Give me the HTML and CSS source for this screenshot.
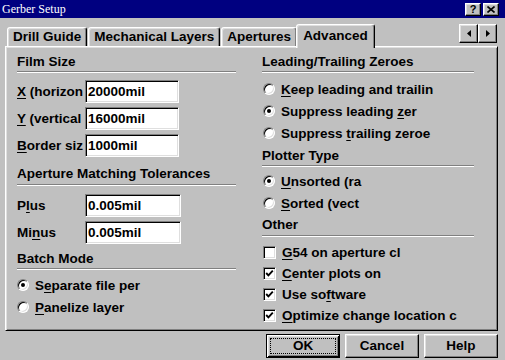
FILE: index.html
```html
<!DOCTYPE html>
<html lang="en">
<head>
  <meta charset="UTF-8" />
  <title>Gerber Setup</title>
  <link rel="stylesheet" href="styles.css">
</head>
<body>

  <div class="dialog">
    <div class="titlebar">
      <span class="title">Gerber Setup</span>
      <div class="caption-btns">
        <span class="cbtn">?</span>
        <span class="cbtn">
          <svg width="8" height="7" viewBox="0 0 8 7"><path d="M0.5 0.5 L7.5 6.5 M7.5 0.5 L0.5 6.5" stroke="#000" stroke-width="1.6" fill="none"/></svg>
        </span>
      </div>
    </div>

    <div class="tabrow">
      <div class="tabs">
        <div class="tab">Drill Guide</div>
        <div class="tab">Mechanical Layers</div>
        <div class="tab">Apertures</div>
        <div class="tab active">Advanced</div>
      </div>
      <div class="scroller">
        <span class="sbtn"><svg width="4" height="7" viewBox="0 0 4 7"><polygon points="4,0 0,3.5 4,7" fill="#000"/></svg></span>
        <span class="sbtn"><svg width="4" height="7" viewBox="0 0 4 7"><polygon points="0,0 4,3.5 0,7" fill="#000"/></svg></span>
      </div>
    </div>

    <div class="panel">
      <div class="col left">
        <div class="group">
          <div class="heading">Film Size</div>
          <div class="sep"></div>
          <div class="fields">
            <div class="field"><span class="label"><u>X</u> (horizon</span><input class="box" value="20000mil" readonly></div>
            <div class="field"><span class="label"><u>Y</u> (vertical</span><input class="box" value="16000mil" readonly></div>
            <div class="field"><span class="label"><u>B</u>order siz</span><input class="box" value="1000mil" readonly></div>
          </div>
        </div>

        <div class="group g-tol">
          <div class="heading">Aperture Matching Tolerances</div>
          <div class="sep loose"></div>
          <div class="fields f-tol">
            <div class="field"><span class="label">P<u>l</u>us</span><input class="box wide" value="0.005mil" readonly></div>
            <div class="field"><span class="label">Mi<u>n</u>us</span><input class="box wide" value="0.005mil" readonly></div>
          </div>
        </div>

        <div class="group g-batch">
          <div class="heading">Batch Mode</div>
          <div class="sep"></div>
          <div class="opts o-batch">
            <div class="opt"><span class="radio on"></span><span>S<u>e</u>parate file per</span></div>
            <div class="opt"><span class="radio"></span><span><u>P</u>anelize layer</span></div>
          </div>
        </div>
      </div>

      <div class="col right">
        <div class="group">
          <div class="heading">Leading/Trailing Zeroes</div>
          <div class="sep"></div>
          <div class="opts">
            <div class="opt"><span class="radio"></span><span><u>K</u>eep leading and trailin</span></div>
            <div class="opt"><span class="radio on"></span><span>Suppress leading <u>z</u>er</span></div>
            <div class="opt"><span class="radio"></span><span>Suppress <u>t</u>railing zeroe</span></div>
          </div>
        </div>

        <div class="group g-plot">
          <div class="heading">Plotter Type</div>
          <div class="sep"></div>
          <div class="opts tight">
            <div class="opt"><span class="radio on"></span><span><u>U</u>nsorted (ra</span></div>
            <div class="opt"><span class="radio"></span><span><u>S</u>orted (vect</span></div>
          </div>
        </div>

        <div class="group g-other">
          <div class="heading">Other</div>
          <div class="sep loose"></div>
          <div class="opts checks">
            <div class="opt"><span class="check"></span><span><u>G</u>54 on aperture cl</span></div>
            <div class="opt"><span class="check on"><svg width="9" height="9" viewBox="0 0 9 9"><path d="M1.2 4 L3.4 6.3 L7.8 1.6" stroke="#000" stroke-width="1.9" fill="none"/></svg></span><span><u>C</u>enter plots on</span></div>
            <div class="opt"><span class="check on"><svg width="9" height="9" viewBox="0 0 9 9"><path d="M1.2 4 L3.4 6.3 L7.8 1.6" stroke="#000" stroke-width="1.9" fill="none"/></svg></span><span>Use so<u>f</u>tware</span></div>
            <div class="opt"><span class="check on"><svg width="9" height="9" viewBox="0 0 9 9"><path d="M1.2 4 L3.4 6.3 L7.8 1.6" stroke="#000" stroke-width="1.9" fill="none"/></svg></span><span><u>O</u>ptimize change location c</span></div>
          </div>
        </div>
      </div>
    </div>

    <div class="buttons">
      <div class="btn default"><span class="focus">OK</span></div>
      <div class="btn">Cancel</div>
      <div class="btn">Help</div>
    </div>
  </div>

</body>
</html>
```

FILE: styles.css
```css
* {
  margin: 0;
  padding: 0;
  box-sizing: border-box;
}

html, body {
  width: 505px;
  height: 360px;
  overflow: hidden;
  background: #c0c0c0;
  font-family: "Liberation Sans", Arial, sans-serif;
  font-size: 13.5px;
  font-weight: bold;
  color: #000;
}

u {
  text-decoration-thickness: 1px;
  text-underline-offset: 2px;
}

.dialog {
  display: flex;
  flex-direction: column;
  height: 360px;
}

/* title bar */
.titlebar {
  height: 18px;
  background: #000080;
  display: flex;
  align-items: center;
  justify-content: space-between;
  padding: 0 6px 0 2px;
}

.title {
  font-family: "Liberation Serif", serif;
  font-weight: normal;
  font-size: 12px;
  line-height: 18px;
  color: #fff;
}

.caption-btns {
  display: flex;
  gap: 2px;
}

.cbtn,
.sbtn,
.btn {
  background: #c0c0c0;
  border: 1px solid;
  border-color: #fff #000 #000 #fff;
  box-shadow: inset -1px -1px #808080, inset 1px 1px #dfdfdf;
  display: flex;
  align-items: center;
  justify-content: center;
}

.cbtn {
  width: 16px;
  height: 13px;
  font-size: 11px;
  line-height: 1;
}

/* tabs */
.tabrow {
  height: 22px;
  margin-top: 6px;
  padding: 0 8px 0 7px;
  display: flex;
  align-items: flex-end;
  justify-content: space-between;
}

.tabs {
  height: 100%;
  display: flex;
  align-items: flex-end;
  gap: 1px;
}

.tab {
  height: 19px;
  padding: 0 5px;
  line-height: 17px;
  white-space: nowrap;
  background: #c0c0c0;
  border: 1px solid;
  border-bottom: none;
  border-color: #fff #000 transparent #fff;
  border-radius: 3px 3px 0 0;
  box-shadow: inset -1px 0 #808080, inset 1px 1px #dfdfdf;
}

.tab.active {
  height: 24px;
  margin: 0 -2px -2px;
  padding: 2px 6px 0;
  position: relative;
  z-index: 1;
}

.scroller {
  align-self: flex-start;
  display: flex;
}

.sbtn {
  width: 19px;
  height: 19px;
}

/* panel */
.panel {
  height: 285px;
  margin: 0 7px 0 5px;
  padding: 7px 0 0 11px;
  border: 1px solid;
  border-color: #fff #000 #000 #fff;
  box-shadow: inset 1px 1px #dfdfdf, inset -1px -1px #808080;
  display: flex;
  gap: 26px;
}

.col {
  display: flex;
  flex-direction: column;
}

.col.left { width: 219px; }
.col.right { width: 212px; }

.heading {
  height: 16px;
  line-height: 16px;
  white-space: nowrap;
}

.sep {
  margin-top: 1px;
  border-top: 1px solid #808080;
  border-bottom: 1px solid #fff;
}

.sep.loose { margin-top: 2px; }

.g-tol { margin-top: 9px; }
.g-batch { margin-top: 7px; }
.g-plot { margin-top: 4px; }
.g-other { margin-top: 3px; }

/* text fields */
.fields {
  margin-top: 7px;
  display: flex;
  flex-direction: column;
  gap: 4px;
}

.fields.f-tol { margin-top: 8px; }

.field {
  height: 23px;
  display: flex;
  align-items: center;
}

.label {
  width: 68px;
  flex: none;
  white-space: nowrap;
}

.box {
  width: 94px;
  height: 23px;
  padding: 0 0 0 2px;
  font: inherit;
  color: #000;
  background: #fff;
  outline: none;
  border: 1px solid;
  border-color: #808080 #fff #fff #808080;
  box-shadow: inset 1px 1px #000, inset -1px -1px #dfdfdf;
}

.box.wide { width: 96px; }

/* radio and check options */
.opts {
  margin-top: 5px;
  display: flex;
  flex-direction: column;
}

.opts.tight { margin-top: 3px; }
.o-batch { margin-top: 4px; }

.opt {
  height: 22px;
  display: flex;
  align-items: center;
  gap: 6px;
  white-space: nowrap;
}

.checks .opt { height: 21px; }

.right .opt { padding-left: 1px; }

.radio {
  flex: none;
  width: 12px;
  height: 12px;
  border-radius: 50%;
  background: #fff;
  border: 1px solid;
  border-color: #808080 #fff #fff #808080;
  box-shadow: inset 1px 1px #000, inset -1px -1px #dfdfdf;
  display: flex;
  align-items: center;
  justify-content: center;
}

.radio.on::after {
  content: "";
  width: 4px;
  height: 4px;
  border-radius: 50%;
  background: #000;
}

.check {
  flex: none;
  width: 13px;
  height: 13px;
  background: #fff;
  border: 1px solid;
  border-color: #808080 #fff #fff #808080;
  box-shadow: inset 1px 1px #000, inset -1px -1px #dfdfdf;
  display: flex;
  align-items: center;
  justify-content: center;
}

/* dialog buttons */
.buttons {
  margin-top: 3px;
  padding-right: 7px;
  display: flex;
  justify-content: flex-end;
  gap: 5px;
}

.btn {
  width: 74px;
  height: 24px;
  line-height: 16px;
}

.btn.default {
  padding: 3px;
  border: 1px solid #000;
  box-shadow: inset 1px 1px #fff, inset -1px -1px #000, inset 2px 2px #dfdfdf, inset -2px -2px #808080;
}

.focus {
  align-self: stretch;
  flex: 1;
  border: 1px dotted #000;
  display: flex;
  align-items: center;
  justify-content: center;
}
```
